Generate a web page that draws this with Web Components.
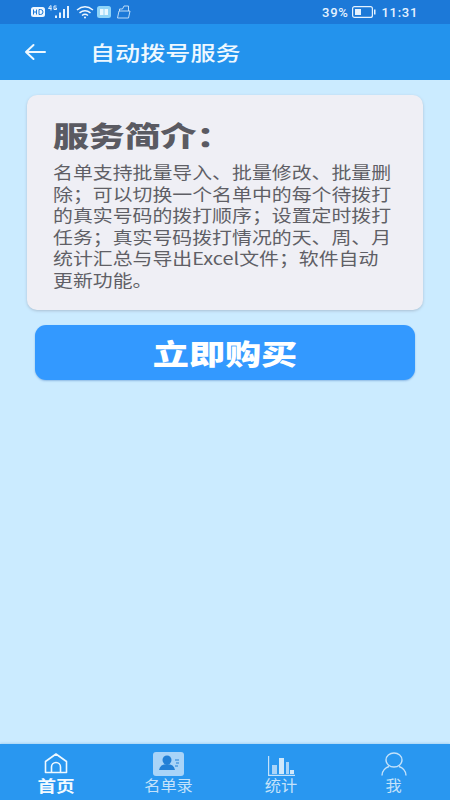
<!DOCTYPE html>
<html lang="zh">
<head>
<meta charset="utf-8">
<title>自动拨号服务</title>
<style>
  html, body { margin: 0; height: 100%; }
  body {
    width: 450px; height: 800px; overflow: hidden;
    display: flex; flex-direction: column;
    background: #cbebff;
    font-family: "Noto Sans CJK SC", "Liberation Sans", sans-serif;
  }
  main { flex: 1; display: flex; flex-direction: column; min-height: 0; }
</style>
</head>
<body>
<status-bar></status-bar>
<app-header>自动拨号服务</app-header>
<main>
  <intro-card heading="服务简介">名单支持批量导入、批量修改、批量删除&#xFF1B;可以切换一个名单中的每个待拨打的真实号码的拨打顺序&#xFF1B;设置定时拨打任务&#xFF1B;真实号码拨打情况的天、周、月统计汇总与导出Excel文件&#xFF1B;软件自动更新功能。</intro-card>
  <buy-button>立即购买</buy-button>
</main>
<tab-bar></tab-bar>

<script>
class StatusBar extends HTMLElement {
  connectedCallback() {
    const shadow = this.attachShadow({ mode: 'open' });
    shadow.innerHTML = `
      <style>
        :host {
          display: flex; align-items: center; height: 24px; box-sizing: border-box;
          padding: 0 32px 0 31px; background: #1c79d8; color: #e4f2ff;
          font: 500 13px Roboto, sans-serif; letter-spacing: .7px;
        }
        .left { display: flex; align-items: center; flex: 1; }
        .right { display: flex; align-items: center; gap: 3px; }
        svg { display: block; }
      </style>
      <div class="left">
        <svg width="14" height="10" viewBox="0 0 14 10"><rect width="14" height="10" rx="2.500" fill="#eef7ff"/><path d="M2.500 2.500v5M5.500 2.500v5M2.500 5h3M8 2.500v5h1.500q2.500 0 2.500-2.500T9.500 2.500z" fill="none" stroke="#1c79d8" stroke-width="1"/></svg>
        <svg width="23" height="14" viewBox="0 0 23 14" fill="#e4f2ff" style="margin-left:3px"><path d="M2.500 .5L.5 3.500h3M3 .5v5M8.500 1H6v3.500h2.500V3H7" fill="none" stroke="#e4f2ff" stroke-width="1"/><rect x="7" y="10.500" width="2" height="2.500"/><rect x="11" y="7.500" width="2" height="5.500"/><rect x="15" y="4" width="2" height="9"/><rect x="19" y="1" width="2" height="12"/></svg>
        <svg width="18" height="14" viewBox="0 0 18 14" fill="none" stroke="#eef7ff" stroke-width="1.500" style="margin-left:5px"><path d="M1 5q8-6.500 16 0M3.500 7.800q5.500-4.300 11 0M6 10.500q3-2.300 6 0"/><circle cx="9" cy="12.500" r="1" fill="#eef7ff" stroke="none"/></svg>
        <svg width="14" height="12" viewBox="0 0 14 12" style="margin-left:3px"><rect width="14" height="12" rx="2.500" fill="#8fd4f8"/><path d="M3 3h3.500v6H3zM7.500 3H11v6H7.500z" fill="#e8f7ff"/></svg>
        <svg width="15" height="14" viewBox="0 0 15 14" fill="none" stroke="#cfe6fb" stroke-width=".9" style="margin-left:5px"><path d="M1.500 13l1.500-7h11l-1.500 7zM3.500 6V4h3l1.500-3h4.500v5"/></svg>
      </div>
      <div class="right">
        <span>39%</span>
        <svg width="24" height="12" viewBox="0 0 24 12"><rect x=".6" y=".6" width="19.800" height="10.800" rx="2" fill="none" stroke="#e4f2ff" stroke-width="1.200"/><rect x="3" y="3" width="6" height="6" fill="#e4f2ff"/><rect x="22" y="3.500" width="1.500" height="5" fill="#e4f2ff"/></svg>
        <span style="margin-left:3px">11:31</span>
      </div>`;
  }
}
customElements.define('status-bar', StatusBar);

class AppHeader extends HTMLElement {
  connectedCallback() {
    const shadow = this.attachShadow({ mode: 'open' });
    shadow.innerHTML = `
      <style>
        :host {
          display: flex; align-items: center; height: 56px; box-sizing: border-box;
          padding: 0 0 0 24px; background: #2393ed; color: #eef8ff;
          font-size: 20px; font-weight: 500;
        }
        svg { display: block; margin-right: 46px; }
        span { display: inline-block; white-space: nowrap; transform: scaleX(1.255); transform-origin: left; margin-left: -2px; }
      </style>
      <svg width="22" height="18" viewBox="0 0 22 18" fill="none" stroke="#eef8ff" stroke-width="2" stroke-linecap="round" stroke-linejoin="round"><path d="M21 9H2M9.500 2L2 9l7.500 7"/></svg>
      <span><slot></slot></span>`;
  }
}
customElements.define('app-header', AppHeader);

class IntroCard extends HTMLElement {
  connectedCallback() {
    const shadow = this.attachShadow({ mode: 'open' });
    shadow.innerHTML = `
      <style>
        :host {
          display: block; box-sizing: border-box; height: 215px;
          margin: 15px 27px 0; padding: 24px 26px 0;
          background: #efeff5; border-radius: 10px;
          box-shadow: 0 1px 3px #a9bfd3; color: #5f5f66;
        }
        h2 {
          width: max-content;
          margin: 0 0 10px; font-size: 28px; line-height: 32px; font-weight: 900;
          white-space: nowrap; transform: scaleX(1.28); transform-origin: left;
          color: #5a5a62;
        }
        h2 b { font-family: "Noto Sans CJK TC", sans-serif; }
        p {
          margin: 0; width: 292px; font-size: 17px; line-height: 21.600px;
          transform: scaleX(1.17); transform-origin: left;
        }
      </style>
      <h2>${this.getAttribute('heading')}<b>&#xFF1A;</b></h2>
      <p><slot></slot></p>`;
  }
}
customElements.define('intro-card', IntroCard);

class BuyButton extends HTMLElement {
  connectedCallback() {
    const shadow = this.attachShadow({ mode: 'open' });
    shadow.innerHTML = `
      <style>
        :host {
          display: flex; align-items: center; justify-content: center;
          height: 55px; margin: 15px 35px 0;
          background: #3399ff; border-radius: 11px;
          box-shadow: 0 1px 2px #8db9e4; color: #fff;
          font-size: 28px; font-weight: 900;
        }
        span { display: inline-block; transform: scaleX(1.29); }
      </style>
      <span><slot></slot></span>`;
  }
}
customElements.define('buy-button', BuyButton);

class TabBar extends HTMLElement {
  connectedCallback() {
    const shadow = this.attachShadow({ mode: 'open' });
    const c = '#c4e2fa';
    const tabs = [
      { label: '首页', active: true, icon: `<svg width="24" height="21" viewBox="0 0 24 21" fill="none" stroke="#eef8ff" stroke-width="1.600" stroke-linejoin="round"><path d="M1.500 19.500V8.500L12 1l10.500 7.500v11zM7.500 19.500v-5.500a4.500 4.500 0 0 1 9 0v5.500"/></svg>` },
      { label: '名单录', icon: `<svg width="31" height="24" viewBox="0 0 31 24"><rect width="31" height="24" rx="3" fill="#a9d4f8"/><circle cx="14" cy="8" r="4.500" fill="#2380d6"/><path d="M6 18q1-6 8-6t8 6z" fill="#2380d6"/><path d="M22 8h4M23 11h3M22 14h3" stroke="#2380d6" stroke-width="1"/></svg>` },
      { label: '统计', icon: `<svg width="27" height="20" viewBox="0 0 27 20"><path d="M.6 0v19.400H27" fill="none" stroke="${c}" stroke-width="1.200"/><rect x="4" y="9" width="5" height="9" fill="#a9d4f8"/><rect x="11" y="2" width="5" height="16" fill="#cfe8fb"/><rect x="18" y="6" width="3" height="12" fill="#a9d4f8"/><rect x="22" y="14" width="4" height="4" fill="#cfe8fb"/></svg>` },
      { label: '我', icon: `<svg width="26" height="24" viewBox="0 0 26 24" fill="none" stroke="${c}" stroke-width="1.400"><ellipse cx="13" cy="8" rx="8" ry="7"/><path d="M1 23.500c0-5 4-8 7-9M25 23.500c0-5-4-8-7-9"/></svg>` },
    ];
    shadow.innerHTML = `
      <style>
        :host {
          display: grid; grid-template-columns: repeat(4, 1fr);
          height: 56px; box-sizing: border-box; padding-top: 8px;
          background: #2997f0; box-shadow: 0 -1px 2px #a8d4f4;
        }
        .tab { display: flex; flex-direction: column; align-items: center; color: ${c}; font-size: 15px; line-height: 18px; }
        .tab span { display: block; transform: scaleX(1.08); }
        .tab.active { color: #f2faff; font-size: 16px; font-weight: 700; }
        .tab.active span { transform: scaleX(1.16); }
        .icon { height: 24px; display: flex; align-items: flex-end; }
        .tab.active .icon { padding-bottom: 2px; height: 22px; }
        svg { display: block; }
      </style>
      ${tabs.map(t => `<div class="tab${t.active ? ' active' : ''}"><div class="icon">${t.icon}</div><span>${t.label}</span></div>`).join('')}`;
  }
}
customElements.define('tab-bar', TabBar);
</script>
</body>
</html>
